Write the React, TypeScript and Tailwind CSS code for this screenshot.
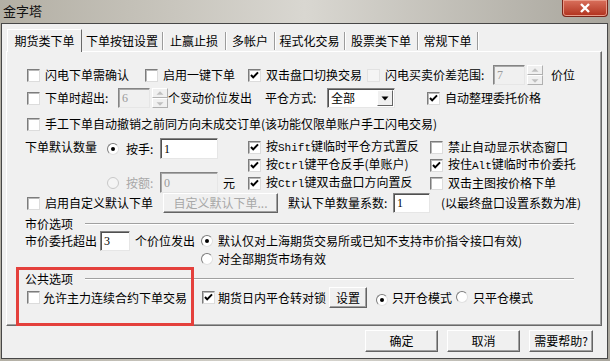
import React from 'react';

function Check({ checked = false, disabled = false }: { checked?: boolean; disabled?: boolean }) {
  return (
    <span
      className={
        disabled
          ? 'inline-flex w-[13px] h-[13px] shrink-0 border border-[#e2e2e2] bg-[#f4f4f4]'
          : 'inline-flex w-[13px] h-[13px] shrink-0 items-center justify-center border border-t-[#7c7c7c] border-l-[#7c7c7c] border-b-[#dcdcdc] border-r-[#dcdcdc] bg-white shadow-[inset_1px_1px_0_#b8b8b8]'
      }
    >
      {checked && (
        <svg width="11" height="11" viewBox="0 0 11 11">
          <polyline points="2,5 4.2,7.4 9,2.4" fill="none" stroke="#000" strokeWidth="2" />
        </svg>
      )}
    </span>
  );
}

function Radio({ on = false, disabled = false }: { on?: boolean; disabled?: boolean }) {
  return (
    <span
      className={
        disabled
          ? 'inline-flex w-[12px] h-[12px] shrink-0 rounded-full border border-[#c8c8c8] bg-[#f4f4f4]'
          : 'inline-flex w-[12px] h-[12px] shrink-0 items-center justify-center rounded-full border border-t-[#7c7c7c] border-l-[#7c7c7c] border-b-[#e0e0e0] border-r-[#e0e0e0] bg-white'
      }
    >
      {on && <span className="w-[4px] h-[4px] rounded-full bg-black" />}
    </span>
  );
}

function Field({ value, w, h = 'h-[20px]', disabled = false }: { value: string; w: string; h?: string; disabled?: boolean }) {
  return (
    <span
      className={`inline-flex items-center ${w} ${h} shrink-0 pl-[3px] border border-t-[#848484] border-l-[#848484] border-b-[#e6e6e6] border-r-[#e6e6e6] shadow-[inset_1px_1px_0_#505050] font-['Liberation_Serif',serif] text-[12px] ${
        disabled ? 'bg-[#f0f0f0] text-[#9a9a9a] shadow-[inset_1px_1px_0_#a8a8a8]' : 'bg-white text-black'
      }`}
    >
      {value}
    </span>
  );
}

function Spinner() {
  return (
    <span className="inline-flex flex-col w-[16px] h-[20px] shrink-0 ml-[2px]">
      {['M4 6 L8 2 L12 6', 'M4 3 L8 7 L12 3'].map((d) => (
        <span
          key={d}
          className="flex items-center justify-center h-[10px] border border-t-white border-l-white border-b-[#b0b0b0] border-r-[#b0b0b0] bg-[#f0f0f0]"
        >
          <svg width="16" height="8" viewBox="0 0 16 8">
            <path d={d} fill="#c0c0c0" />
          </svg>
        </span>
      ))}
    </span>
  );
}

function Btn({ label, w, h = 'h-[22px]', disabled = false }: { label: string; w: string; h?: string; disabled?: boolean }) {
  return (
    <span
      className={`inline-flex items-center justify-center ${w} ${h} shrink-0 border border-t-white border-l-white border-b-[#646464] border-r-[#646464] bg-[#f0f0f0] shadow-[inset_-1px_-1px_0_#a0a0a0] ${
        disabled ? 'text-[#a8a8a8]' : 'text-black'
      }`}
    >
      {label}
    </span>
  );
}

function Opt({ label, checked = false, disabled = false, w = '' }: { label: React.ReactNode; checked?: boolean; disabled?: boolean; w?: string }) {
  return (
    <span className={`flex items-center shrink-0 ${w}`}>
      <Check checked={checked} disabled={disabled} />
      <span className="ml-[5px] whitespace-nowrap">{label}</span>
    </span>
  );
}

function Latin({ children }: { children: string }) {
  return <span className="font-['Liberation_Mono',monospace] text-[11px]">{children}</span>;
}

function GroupTitle({ title, mt }: { title: string; mt: string }) {
  return (
    <div className={`flex items-center h-[14px] ${mt}`}>
      <span className="-ml-[2px] whitespace-nowrap">{title}</span>
      <span className="ml-[12px] mr-[7px] flex-1 h-[2px] border-t border-t-[#a0a0a0] border-b border-b-white" />
    </div>
  );
}

const tabs = [
  { name: '下单按钮设置', w: 'w-[81px]' },
  { name: '止赢止损', w: 'w-[63px]' },
  { name: '多帐户', w: 'w-[49px]' },
  { name: '程式化交易', w: 'w-[70px]' },
  { name: '股票类下单', w: 'w-[73px]' },
  { name: '常规下单', w: 'w-[60px]' },
];

export default function App() {
  return (
    <div className="relative w-[610px] h-[361px] overflow-hidden bg-gradient-to-r from-[#b3afa4] via-[#d9d7d1] to-[#a9a69d] font-['Noto_Sans_CJK_SC','Noto_Sans',sans-serif] text-[12px] leading-[14px] text-black">
      {/* Title bar */}
      <div className="flex h-[23px]">
        <span className="pl-[3px] pt-[3px] text-[13px] leading-[16px] text-[#111]">金字塔</span>
        <span className="ml-auto mr-[2px] w-[46px] h-[17px] flex items-center justify-center rounded-b-[4px] border border-t-0 border-[#7a2418] bg-gradient-to-b from-[#d9705c] to-[#b0301c] shadow-[inset_0_0_0_1px_#e89a88]">
          <svg width="12" height="10" viewBox="0 0 12 10">
            <path d="M2 1 L10 9 M10 1 L2 9" stroke="#fff" strokeWidth="2.4" />
          </svg>
        </span>
      </div>

      {/* Dialog body */}
      <div className="ml-[1px] w-[607px] h-[336px] border border-[#474747] bg-[#f0f0f0]">
        {/* Tabs */}
        <div className="flex items-end pl-[5px] pt-[4px] h-[27px]">
          <span className="flex items-center justify-center w-[75px] h-[23px] border-t border-l border-t-white border-l-white border-r border-r-[#696969] bg-[#f0f0f0] relative top-[1px]">
            期货类下单
          </span>
          {tabs.map((t) => (
            <span key={t.name} className={`flex items-center justify-center ${t.w} h-[18px] mb-[1px] border-r border-r-[#9c9c9c] shadow-[1px_0_0_#ffffff]`}>
              {t.name}
            </span>
          ))}
        </div>

        {/* Tab panel */}
        <div className="ml-[4px] w-[596px] h-[275px] border border-t-white border-l-white border-b-[#696969] border-r-[#696969] shadow-[inset_-1px_-1px_0_#a0a0a0] pl-[20px] pr-[20px] pt-[13px]">
          {/* Row 1 */}
          <div className="flex items-center h-[20px]">
            <Opt label="闪电下单需确认" w="w-[118px]" />
            <Opt label="启用一键下单" w="w-[103px]" />
            <Opt label="双击盘口切换交易" checked w="w-[119px]" />
            <Opt label="闪电买卖价差范围:" disabled w="w-[126px]" />
            <Field value="7" w="w-[32px]" disabled />
            <Spinner />
            <span className="ml-[8px] whitespace-nowrap shrink-0">价位</span>
          </div>

          {/* Row 2 */}
          <div className="flex items-center h-[20px] mt-[3px]">
            <Opt label="下单时超出:" w="w-[91px]" />
            <Field value="6" w="w-[32px]" disabled />
            <Spinner />
            <span className="w-[97px] whitespace-nowrap">个变动价位发出</span>
            <span className="w-[62px] whitespace-nowrap">平仓方式:</span>
            <span className="flex items-center w-[68px] h-[20px] shrink-0 border border-t-[#848484] border-l-[#848484] border-b-[#e6e6e6] border-r-[#e6e6e6] shadow-[inset_1px_1px_0_#505050] bg-white pl-[3px]">
              <span className="flex-1">全部</span>
              <span className="flex items-center justify-center w-[16px] h-[16px] mr-[1px] border border-t-white border-l-white border-b-[#646464] border-r-[#646464] bg-[#f0f0f0]">
                <svg width="8" height="5" viewBox="0 0 8 5">
                  <path d="M0.5 0.5 L7.5 0.5 L4 4.5 Z" fill="#000" />
                </svg>
              </span>
            </span>
            <span className="ml-[32px]">
              <Opt label="自动整理委托价格" checked />
            </span>
          </div>

          {/* Row 3 */}
          <div className="flex items-center h-[16px] mt-[8px]">
            <Opt label="手工下单自动撤销之前同方向未成交订单(该功能仅限单账户手工闪电交易)" />
          </div>

          {/* Default quantity block */}
          <div className="flex mt-[6px] h-[55px]">
            <div className="-ml-[2px] w-[82px] h-[18px] flex items-center whitespace-nowrap">下单默认数量</div>
            <div className="w-[141px] flex flex-col">
              <div className="flex items-center h-[21px]">
                <Radio on />
                <span className="ml-[7px] w-[34px]">按手:</span>
                <Field value="1" w="w-[58px]" h="h-[21px]" />
              </div>
              <div className="flex items-center h-[21px] mt-[13px]">
                <Radio disabled />
                <span className="ml-[7px] w-[34px] text-[#a8a8a8]">按额:</span>
                <Field value="0" w="w-[58px]" h="h-[21px]" disabled />
                <span className="ml-[5px]">元</span>
              </div>
            </div>
            <div className="w-[182px] flex flex-col">
              <div className="flex items-center h-[18px]">
                <Opt checked label={<>按<Latin>Shift</Latin>键临时平仓方式置反</>} />
              </div>
              <div className="flex items-center h-[18px]">
                <Opt checked label={<>按<Latin>Ctrl</Latin>键平仓反手(单账户)</>} />
              </div>
              <div className="flex items-center h-[18px]">
                <Opt checked label={<>按<Latin>Ctrl</Latin>键双击盘口方向置反</>} />
              </div>
            </div>
            <div className="flex flex-col">
              <div className="flex items-center h-[18px]">
                <Opt label="禁止自动显示状态窗口" />
              </div>
              <div className="flex items-center h-[18px]">
                <Opt checked label={<>按住<Latin>Alt</Latin>键临时市价委托</>} />
              </div>
              <div className="flex items-center h-[18px]">
                <Opt label="双击主图按价格下单" />
              </div>
            </div>
          </div>

          {/* Row 7 */}
          <div className="flex items-center h-[20px]">
            <Opt label="启用自定义默认下单" w="w-[136px]" />
            <Btn label="自定义默认下单..." w="w-[115px]" h="h-[20px]" disabled />
            <span className="ml-[10px] w-[107px] whitespace-nowrap">默认下单数量系数:</span>
            <Field value="1" w="w-[37px]" />
            <span className="ml-[11px] whitespace-nowrap">(以最终盘口设置系数为准)</span>
          </div>

          {/* 市价选项 */}
          <GroupTitle title="市价选项" mt="mt-[4px]" />
          <div className="flex items-center h-[20px]">
            <span className="-ml-[2px] w-[75px] whitespace-nowrap">市价委托超出</span>
            <Field value="3" w="w-[30px]" />
            <span className="ml-[5px] w-[66px] whitespace-nowrap">个价位发出</span>
            <Radio on />
            <span className="ml-[5px] whitespace-nowrap">默认仅对上海期货交易所或已知不支持市价指令接口有效)</span>
          </div>
          <div className="flex items-center h-[16px] pl-[174px]">
            <Radio />
            <span className="ml-[5px] whitespace-nowrap">对全部期货市场有效</span>
          </div>

          {/* 公共选项 */}
          <GroupTitle title="公共选项" mt="mt-[5px]" />
          <div className="flex items-center h-[21px] mt-[1px]">
            <span className="flex items-center w-[175px] shrink-0">
              <Check />
              <span className="ml-[3px] whitespace-nowrap">允许主力连续合约下单交易</span>
            </span>
            <span className="flex items-center shrink-0">
              <Check checked />
              <span className="ml-[3px] whitespace-nowrap">期货日内平仓转对锁</span>
            </span>
            <span className="ml-[3px]">
              <Btn label="设置" w="w-[38px]" h="h-[21px]" />
            </span>
            <span className="ml-[9px]">
              <Radio on />
            </span>
            <span className="ml-[4px] whitespace-nowrap">只开仓模式</span>
            <span className="ml-[4px]">
              <Radio />
            </span>
            <span className="ml-[5px] whitespace-nowrap">只平仓模式</span>
          </div>
        </div>

        {/* Dialog buttons */}
        <div className="flex justify-end gap-[9px] pr-[14px] mt-[4px]">
          <Btn label="确定" w="w-[73px]" />
          <Btn label="取消" w="w-[73px]" />
          <Btn label="需要帮助?" w="w-[64px]" />
        </div>
      </div>

      {/* Highlight box drawn over the 公共选项 group */}
      <div className="absolute left-[16px] top-[267px] w-[178px] h-[59px] border-[3px] border-[#e4403c]" />
    </div>
  );
}
